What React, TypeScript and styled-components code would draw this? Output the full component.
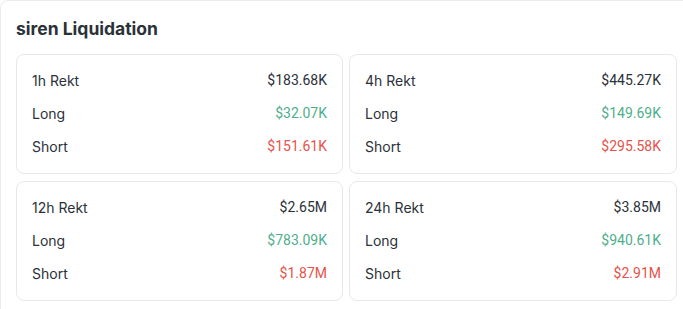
import React from "react";
import styled, { createGlobalStyle } from "styled-components";

const Global = createGlobalStyle`
  html, body { margin: 0; padding: 0; background: #ffffff; overflow: hidden; }
  body { font-family: "IBM Plex Sans", Inter, "Noto Sans", sans-serif; }
`;

const Panel = styled.section`
  box-sizing: border-box;
  width: 695px;
  margin-top: 0;
  border: 1px solid #eaecef;
  border-radius: 8px;
  padding: 16px 16px 16px 15px;
`;

const Title = styled.h2`
  margin: 0 0 13px 0;
  font-family: Inter, "Noto Sans", sans-serif;
  font-size: 17.5px;
  line-height: 24px;
  font-weight: 700;
  color: #2b3139;
`;

const Grid = styled.div`
  display: grid;
  grid-template-columns: 327px 328px;
  column-gap: 6px;
  row-gap: 7px;
`;

const Card = styled.div`
  box-sizing: border-box;
  border: 1px solid #e6e8ea;
  border-radius: 8px;
  padding: 15px 15px 17px;
  display: flex;
  flex-direction: column;
  gap: 13px;
`;

const Row = styled.div`
  display: flex;
  justify-content: space-between;
  align-items: center;
  height: 20px;
`;

const Label = styled.span`
  font-family: Inter, "Noto Sans", sans-serif;
  font-size: 14px;
  color: #2b3139;
`;

const Value = styled.span<{ $tone: "base" | "up" | "down" }>`
  font-family: Roboto, "Noto Sans", sans-serif;
  font-size: 14px;
  color: ${(p) => (p.$tone === "up" ? "#4fae8b" : p.$tone === "down" ? "#e5534b" : "#2b3139")};
`;

const data = [
  { period: "1h", total: "$183.68K", long: "$32.07K", short: "$151.61K" },
  { period: "4h", total: "$445.27K", long: "$149.69K", short: "$295.58K" },
  { period: "12h", total: "$2.65M", long: "$783.09K", short: "$1.87M" },
  { period: "24h", total: "$3.85M", long: "$940.61K", short: "$2.91M" },
];

export default function App() {
  return (
    <>
      <Global />
      <Panel>
        <Title>siren Liquidation</Title>
        <Grid>
          {data.map((d) => (
            <Card key={d.period}>
              <Row>
                <Label>{d.period} Rekt</Label>
                <Value $tone="base">{d.total}</Value>
              </Row>
              <Row>
                <Label>Long</Label>
                <Value $tone="up">{d.long}</Value>
              </Row>
              <Row>
                <Label>Short</Label>
                <Value $tone="down">{d.short}</Value>
              </Row>
            </Card>
          ))}
        </Grid>
      </Panel>
    </>
  );
}
